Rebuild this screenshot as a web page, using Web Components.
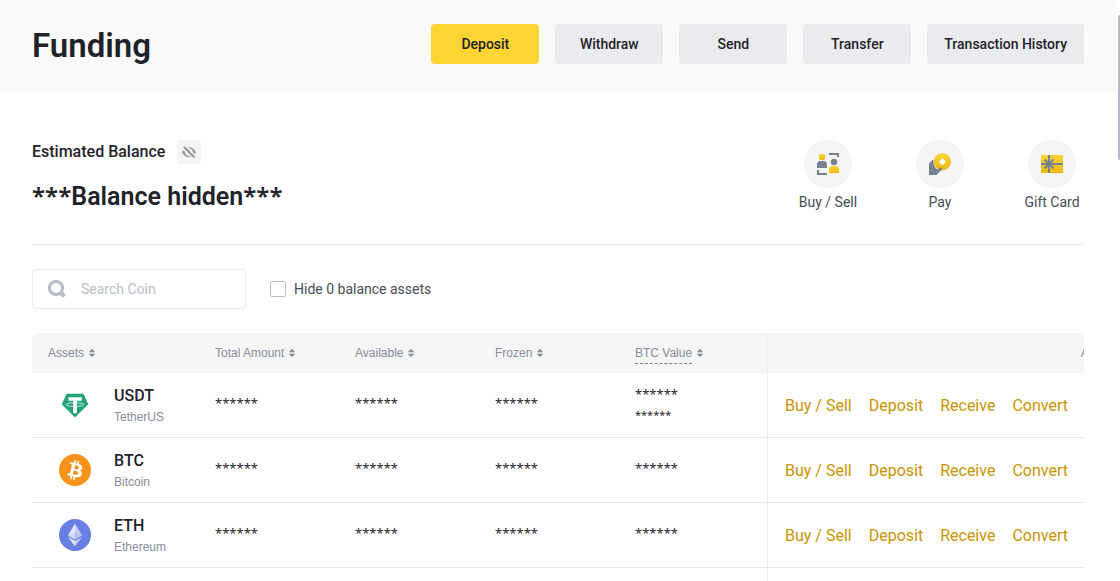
<!DOCTYPE html>
<html lang="en">
<head>
<meta charset="utf-8">
<meta name="viewport" content="width=device-width, initial-scale=1">
<title>Funding</title>
<style>
  :root {
    --ink: #1e2329;
    --ink-2: #474d57;
    --ink-3: #848e9c;
    --line: #eaecef;
    --surface: #fafafa;
    --surface-2: #f5f5f5;
    --yellow: #fcd535;
    --link: #c99400;
    --small-font: "Liberation Sans", Arial, sans-serif;
    --star-font: "Noto Sans", "Open Sans", sans-serif;
  }
  body {
    margin: 0;
    height: 100vh;
    overflow: hidden;
    background: #fff;
    color: var(--ink);
    font: 400 16px/24px Roboto, "Liberation Sans", sans-serif;
  }
</style>
</head>
<body>
<funding-page></funding-page>

<script>
function define(name, html, setup) {
  const template = document.createElement('template');
  template.innerHTML = html;
  customElements.define(name, class extends HTMLElement {
    constructor() {
      super();
      this.attachShadow({ mode: 'open' }).append(template.content.cloneNode(true));
    }
    connectedCallback() {
      if (setup) setup(this, this.shadowRoot);
    }
  });
}

/* Filled or neutral button of the page header */
define('action-button', `
  <style>
    :host { display: block; }
    button {
      display: block; min-width: 108px; height: 40px; padding: 0 17px;
      border: 0; border-radius: 4px; background: #eaebef; color: var(--ink);
      font: inherit; font-size: 14px; font-weight: 500; line-height: 24px; cursor: pointer;
      white-space: nowrap;
    }
    :host([primary]) button { background: var(--yellow); }
  </style>
  <button type="button"><slot></slot></button>`);

define('page-header', `
  <style>
    :host { display: flex; align-items: flex-start; justify-content: space-between;
      padding: 24px 32px; background: var(--surface); }
    h1 { margin: 0; font-size: 33px; line-height: 44px; font-weight: 600; }
    nav { display: flex; gap: 16px; }
  </style>
  <h1><slot name="title"></slot></h1>
  <nav aria-label="Wallet actions"><slot></slot></nav>`);

define('app-icon', `
  <style>
    :host { display: block; }
    svg { display: block; }
  </style>`, (host, root) => {
  if (!root.querySelector('svg')) root.innerHTML += ICONS[host.getAttribute('name')];
});

const ICONS = {
  eye: `<svg width="16" height="16" viewBox="0 0 16 16" fill="none">
    <path d="M1 8.200C2.700 5 5 3.200 8 3.200s5.300 1.800 7 5c-1.700 3.200-4 5-7 5s-5.300-1.800-7-5z" fill="#929ba9"/>
    <circle cx="8" cy="8.200" r="3.600" fill="#f5f5f5"/>
    <circle cx="8" cy="8.200" r="1.800" fill="#929ba9"/>
    <path d="M1.500 4.200 12 14.700M4.500 1.700 15 12.200" stroke="#f5f5f5" stroke-width="1.400"/>
    <path d="M2.800 2.800 13.600 13.600" stroke="#929ba9" stroke-width="2"/></svg>`,
  trade: `<svg width="24" height="24" viewBox="0 0 24 24">
    <defs><linearGradient id="g" x1="0" y1="0" x2="0" y2="1"><stop stop-color="#f8d33a"/><stop offset="1" stop-color="#f0b90b"/></linearGradient></defs>
    <g fill="#76808f"><path d="M13 1h10v4h-2V3h-8zM1 18h2v3h8v2H1zM1 16v-3.500A3.500 3.500 0 0 1 4.500 9h3a3.500 3.500 0 0 1 3.500 3.500V16z"/><circle cx="18" cy="10" r="3.200"/></g>
    <g fill="url(#g)"><circle cx="6" cy="5" r="3.200"/><path d="M13 21v-3.500a3.500 3.500 0 0 1 3.500-3.500h3a3.500 3.500 0 0 1 3.500 3.500V21z"/></g></svg>`,
  pay: `<svg width="24" height="24" viewBox="0 0 24 24">
    <defs><linearGradient id="g" x1="0" y1="0" x2="0" y2="1"><stop stop-color="#f8d33a"/><stop offset="1" stop-color="#f0b90b"/></linearGradient></defs>
    <circle cx="14.300" cy="9.700" r="8.700" fill="url(#g)"/><path d="m14.300 6.200 3.500 3.500-3.500 3.500-3.500-3.500z" fill="#fff"/>
    <path fill="#76808f" d="M1 23V11.500L4.500 8H5.500v3c.4 3 2 5.400 4.300 6.800l1.700-2H14v1.500L8.500 23z"/></svg>`,
  gift: `<svg width="24" height="24" viewBox="0 0 24 24">
    <defs><linearGradient id="g" x1="0" y1="0" x2="0" y2="1"><stop stop-color="#f8d33a"/><stop offset="1" stop-color="#f0b90b"/></linearGradient></defs>
    <path fill="url(#g)" d="M1 3h22v18H1z"/><path d="M1 12h22M9 3v18M4.500 7.500l9 9M13.500 7.500l-9 9" stroke="#76808f" stroke-width="2"/></svg>`,
  search: `<svg width="20" height="20" viewBox="0 0 20 20" fill="none" stroke="#b7bdc6">
    <circle cx="9" cy="9" r="6.600" stroke-width="3"/><path d="m13 13 4.500 4.500" stroke-width="4"/></svg>`,
  sort: `<svg width="6" height="8" viewBox="0 0 6 8" fill="#848e9c"><path d="M3 0l2.700 2.600v.6H.3v-.6zM3 8 .3 5.400v-.6h5.400v.6z"/></svg>`,
  usdt: `<svg width="32" height="32" viewBox="0 0 32 32">
    <path fill="#26a17b" d="M7.700 4.700h16.800l4.800 10.600L16 28.500 2.700 15.300z"/>
    <path fill="#fff" d="M9.500 8.200h13.200v3.600h-4.800v12.400h-3.700V11.800H9.500z"/>
    <ellipse cx="16" cy="15.600" rx="8.700" ry="1.900" fill="none" stroke="#d4eee5" stroke-width=".9"/></svg>`,
  btc: `<svg width="32" height="32" viewBox="0 0 32 32"><circle cx="16" cy="16" r="16" fill="#f7931a"/>
    <path fill="#fff" d="M23.189 14.020c.314-2.096-1.283-3.223-3.465-3.975l.708-2.840-1.728-.430-.690 2.765c-.454-.114-.920-.220-1.385-.326l.695-2.783L15.596 6l-.708 2.839c-.376-.086-.746-.170-1.104-.260l.002-.009-2.384-.595-.460 1.846s1.283.294 1.256.312c.700.175.826.638.805 1.006l-.806 3.235c.048.012.110.030.180.057l-.183-.045-1.130 4.532c-.086.212-.303.531-.793.410.018.025-1.256-.313-1.256-.313l-.858 1.978 2.250.561c.418.105.828.215 1.231.318l-.715 2.872 1.727.430.708-2.840c.472.127.930.245 1.378.357l-.706 2.828 1.728.430.715-2.866c2.948.558 5.164.333 6.097-2.333.752-2.146-.037-3.385-1.588-4.192 1.130-.260 1.980-1.003 2.207-2.538zm-3.950 5.538c-.533 2.147-4.148.986-5.320.695l.950-3.805c1.172.293 4.929.872 4.370 3.110zm.535-5.569c-.487 1.953-3.495.960-4.470.717l.860-3.450c.975.243 4.118.696 3.610 2.733z"/></svg>`,
  eth: `<svg width="32" height="32" viewBox="0 0 32 32"><circle cx="16" cy="16" r="16" fill="#6880e3"/>
    <path fill="#e4e8f8" d="m16 4.800-7 11.500 7 4.200z"/><path fill="#c6cff2" d="m16 4.800 7 11.500-7 4.200z"/>
    <path fill="#b3bfee" d="m16 13.200 7 3.100-7 4.200z"/><path fill="#d4daf5" d="m16 13.200-7 3.100 7 4.200z"/>
    <path fill="#e8ecfb" d="m9 18 7 4.100v5.200z"/><path fill="#c6cff2" d="m23 18-7 4.100v5.200z"/></svg>`
};

define('balance-summary', `
  <style>
    :host { display: block; }
    .label { display: flex; align-items: center; gap: 12px; font-weight: 500; }
    button { display: grid; place-items: center; width: 24px; height: 24px; padding: 0;
      border: 0; border-radius: 4px; background: var(--surface-2); cursor: pointer; }
    p { margin: 18px 0 0; font-size: 25px; line-height: 30px; font-weight: 600; }
    .stars { font-family: var(--star-font); font-size: 24px; line-height: 24px; }
  </style>
  <div class="label"><slot></slot>
    <button type="button" aria-label="Show balance"><app-icon name="eye"></app-icon></button></div>
  <p><span class="stars">***</span>Balance hidden<span class="stars">***</span></p>`);

define('quick-link', `
  <style>
    :host { display: block; width: 64px; }
    a { display: flex; flex-direction: column; align-items: center; gap: 4px;
      color: var(--ink-2); text-decoration: none; font-size: 14px; line-height: 20px; white-space: nowrap; }
    .disc { display: grid; place-items: center; width: 48px; height: 48px;
      border-radius: 50%; background: var(--surface-2); }
  </style>
  <a href="#"><span class="disc"></span><slot></slot></a>`, (host, root) => {
  const icon = document.createElement('app-icon');
  icon.setAttribute('name', host.getAttribute('icon'));
  root.querySelector('.disc').replaceChildren(icon);
});

define('coin-filter', `
  <style>
    :host { display: flex; align-items: center; gap: 24px; font-size: 14px; line-height: 20px; }
    .search { display: flex; align-items: center; gap: 14px; box-sizing: border-box;
      width: 214px; height: 40px; padding: 0 14px; border: 1px solid var(--line); border-radius: 4px; }
    .search input { flex: 1; min-width: 0; padding: 0; border: 0; outline: 0; background: none;
      color: var(--ink); font: inherit; }
    .search input::placeholder { color: #b7bdc6; opacity: 1; }
    .check { display: flex; align-items: center; gap: 8px; color: var(--ink-2); }
    .check input { appearance: none; box-sizing: border-box; width: 16px; height: 16px; margin: 0;
      border: 1px solid #b7bdc6; border-radius: 2px; background: #fff; }
    .check input:checked { background: var(--yellow); }
  </style>
  <label class="search"><app-icon name="search"></app-icon>
    <input type="text" placeholder="Search Coin" aria-label="Search Coin"></label>
  <label class="check"><input type="checkbox">Hide 0 balance assets</label>`);

define('sort-button', `
  <style>
    :host { display: block; }
    button { display: flex; align-items: center; gap: 5px; padding: 0; border: 0; background: none;
      color: inherit; font: inherit; line-height: 20px; white-space: nowrap; cursor: pointer; }
    :host([hint]) span { border-bottom: 1px dashed #76808f; margin-bottom: -1px; }
  </style>
  <button type="button"><span><slot></slot></span><app-icon name="sort"></app-icon></button>`);

define('coin-cell', `
  <style>
    :host { display: flex; align-items: center; gap: 23px; padding-left: 11px; }
    b, small { display: block; }
    b { font-weight: 500; font-size: 16px; line-height: 24px; }
    small { color: var(--ink-3); font: 400 12px/18px var(--small-font); }
  </style>
  <slot name="icon"></slot>
  <span><b><slot name="symbol"></slot></b><small><slot></slot></small></span>`);

define('asset-table', `
  <style>
    :host { display: block; overflow: hidden; border-radius: 8px 0 0 0; }
    table { width: 100%; min-width: 1098px; table-layout: fixed; border-spacing: 0; }
    .name { width: 167px; }
    .amount { width: 140px; }
    .value { width: 148px; }
    th, td { box-sizing: border-box; padding: 0 16px; text-align: left; }
    th { height: 40px; background: #f5f5f5; color: var(--ink-3); font: 400 12px/20px var(--small-font); }
    td { height: 65px; border-bottom: 1px solid #e6e8ea; }
    .fixed { border-left: 1px solid #eee; }
    th.fixed { text-align: right; }
    .mask { display: block; font: 400 13px/22px var(--star-font); }
    .mask:only-child { padding-bottom: 4px; }
    .mask.minor { padding-bottom: 2px; font-size: 11px; line-height: 20px; }
    td.fixed { padding: 2px 17px 0; }
    .links { display: flex; gap: 17px; }
    a { color: var(--link); text-decoration: none; white-space: nowrap; }
  </style>
  <table>
    <colgroup><col class="name"><col class="amount"><col class="amount"><col class="amount"><col class="value"><col></colgroup>
    <thead><tr>
      <th scope="col"><sort-button>Assets</sort-button></th>
      <th scope="col"><sort-button>Total Amount</sort-button></th>
      <th scope="col"><sort-button>Available</sort-button></th>
      <th scope="col"><sort-button>Frozen</sort-button></th>
      <th scope="col"><sort-button hint>BTC Value</sort-button></th>
      <th scope="col" class="fixed">Action</th>
    </tr></thead>
    <tbody></tbody>
  </table>`, (host, root) => {
  const mask = '<span class="mask">******</span>';
  const coins = [
    ['usdt', 'USDT', 'TetherUS', mask + '<span class="mask minor">******</span>'],
    ['btc', 'BTC', 'Bitcoin', mask],
    ['eth', 'ETH', 'Ethereum', mask]
  ];
  const links = ['Buy / Sell', 'Deposit', 'Receive', 'Convert'].map(t => `<a href="#">${t}</a>`).join('');
  root.querySelector('tbody').innerHTML = coins.map(([icon, symbol, name, value]) => `<tr>
    <td><coin-cell><app-icon slot="icon" name="${icon}"></app-icon><span slot="symbol">${symbol}</span>${name}</coin-cell></td>
    <td>${mask}</td><td>${mask}</td><td>${mask}</td><td>${value}</td>
    <td class="fixed"><div class="links">${links}</div></td></tr>`).join('')
    + '<tr><td></td><td></td><td></td><td></td><td></td><td class="fixed"></td></tr>';
});

define('scroll-rail', `
  <style>
    :host { display: flex; justify-content: flex-end; width: 4px; padding-top: 15px; }
    i { width: 2px; height: 25vh; border-radius: 2px 0 0 2px; background: #b5b9ca; }
  </style><i></i>`);

define('funding-page', `
  <style>
    :host { display: flex; height: 100%; overflow: hidden; }
    .main { flex: 1; min-width: 0; }
    section { margin: 0 32px; }
    .overview { display: flex; justify-content: space-between; align-items: flex-start;
      padding: 48px 0 32px; border-bottom: 1px solid var(--line); }
    .quick { display: flex; gap: 48px; }
    coin-filter { margin: 24px 0; }
  </style>
  <div class="main">
    <page-header><span slot="title">Funding</span>
      <action-button primary>Deposit</action-button>
      <action-button>Withdraw</action-button>
      <action-button>Send</action-button>
      <action-button>Transfer</action-button>
      <action-button>Transaction History</action-button>
    </page-header>
    <section class="overview">
      <balance-summary>Estimated Balance</balance-summary>
      <div class="quick">
        <quick-link icon="trade">Buy / Sell</quick-link>
        <quick-link icon="pay">Pay</quick-link>
        <quick-link icon="gift">Gift Card</quick-link>
      </div>
    </section>
    <section>
      <coin-filter></coin-filter>
      <asset-table></asset-table>
    </section>
  </div>
  <scroll-rail aria-hidden="true"></scroll-rail>`);
</script>
</body>
</html>
